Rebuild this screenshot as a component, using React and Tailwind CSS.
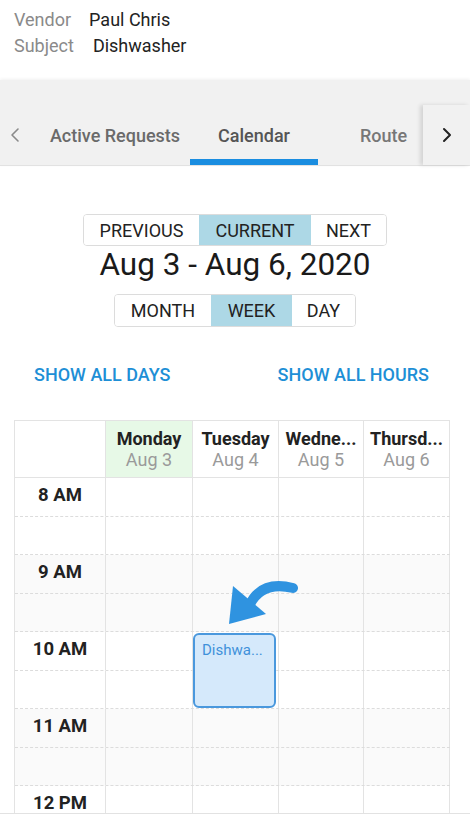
import React from 'react';
import { ChevronLeft, ChevronRight } from 'lucide-react';

const days = [
    { name: 'Monday', date: 'Aug 3', today: true },
    { name: 'Tuesday', date: 'Aug 4' },
    { name: 'Wedne...', date: 'Aug 5' },
    { name: 'Thursd...', date: 'Aug 6' },
];

const hours = ['8 AM', '9 AM', '10 AM', '11 AM', '12 PM'];
const colWidths = ['w-[91px]', 'w-[87px]', 'w-[86px]', 'w-[85px]', 'w-[86px]'];

const Segmented = ({ items, widths, active, height }) => (
    <div className={`flex border border-[#dcdcdc] rounded-[4px] overflow-hidden ${height}`}>
        {items.map((label, i) => (
            <div
                key={label}
                className={`${widths[i]} flex items-center justify-center text-[18px] text-[#222] ${i === active ? 'bg-[#add8e6]' : 'bg-white'}`}
            >
                {label}
            </div>
        ))}
    </div>
);

const App = () => {
    return (
        <div className="relative w-[470px] h-[828px] overflow-hidden bg-white font-['Roboto',sans-serif]">
            {/* Vendor info */}
            <div className="h-[80px] px-[14px] pt-[7px] text-[18px] leading-[26px]">
                <div>
                    <span className="text-[#8a8a8a] mr-[18px]">Vendor</span>
                    <span className="text-[#222]">Paul Chris</span>
                </div>
                <div>
                    <span className="text-[#8a8a8a] mr-[19px]">Subject</span>
                    <span className="text-[#222]">Dishwasher</span>
                </div>
            </div>

            {/* Tabs */}
            <div className="h-[86px] pt-[25px] bg-[#f1f1f1] border-b border-[#e2e2e2] shadow-[0_-1px_3px_rgba(0,0,0,0.06)]">
                <div className="flex h-[60px] text-[18px] font-medium">
                    <div className="w-[30px] flex items-center justify-center">
                        <ChevronLeft size={24} strokeWidth={1.6} className="text-[#8a8a8a]" />
                    </div>
                    <div className="w-[160px] flex items-center justify-center pl-[10px] text-[#6a6a6a]">Active Requests</div>
                    <div className="w-[128px] flex flex-col">
                        <div className="flex-1 flex items-center justify-center pt-[6px] text-[#555]">Calendar</div>
                        <div className="h-[6px] bg-[#1a8de0]" />
                    </div>
                    <div className="flex-1 flex items-center pl-[42px] text-[#777] overflow-hidden">Route</div>
                    <div className="w-[47px] flex items-center justify-center bg-[#f1f1f1] shadow-[-3px_0_4px_rgba(0,0,0,0.12)]">
                        <ChevronRight size={24} strokeWidth={2} className="text-[#222]" />
                    </div>
                </div>
            </div>

            {/* Calendar controls */}
            <div className="pt-[48px] flex flex-col items-center">
                <Segmented
                    items={['PREVIOUS', 'CURRENT', 'NEXT']}
                    widths={['w-[115px]', 'w-[112px]', 'w-[75px]']}
                    active={1}
                    height="h-[32px]"
                />
                <div className="text-[31.5px] leading-[38px] text-[#1a1a1a]">Aug 3 - Aug 6, 2020</div>
                <div className="mt-[10px]">
                    <Segmented
                        items={['MONTH', 'WEEK', 'DAY']}
                        widths={['w-[96px]', 'w-[81px]', 'w-[63px]']}
                        active={1}
                        height="h-[33px]"
                    />
                </div>
            </div>

            <div className="mt-[36px] pl-[34px] pr-[41px] flex justify-between text-[18px] leading-[24px] font-medium text-[#1e8fd6]">
                <span>SHOW ALL DAYS</span>
                <span>SHOW ALL HOURS</span>
            </div>

            {/* Week grid */}
            <div className="mt-[33px] h-[393px] overflow-hidden">
                <div className="relative ml-[14px] w-[436px] border-l border-t border-[#e3e3e3]">
                    <div className="flex h-[57px] border-b border-[#e3e3e3]">
                        <div className={`${colWidths[0]} border-r border-[#e3e3e3]`} />
                        {days.map((d, i) => (
                            <div
                                key={d.date}
                                className={`${colWidths[i + 1]} border-r border-[#e3e3e3] flex flex-col items-center justify-center text-[18px] leading-[21px] ${d.today ? 'bg-[#e7f9e7]' : ''}`}
                            >
                                <span className="font-bold text-[#222]">{d.name}</span>
                                <span className="text-[#9a9a9a]">{d.date}</span>
                            </div>
                        ))}
                    </div>

                    {hours.map((h, hi) => (
                        <div key={h} className={hi % 2 === 1 ? 'bg-[#fafafa]' : 'bg-white'}>
                            {[0, 1].map((half) => (
                                <div key={half} className="flex h-[38.5px] border-b border-dashed border-[#dcdcdc]">
                                    <div className={`${colWidths[0]} border-r border-[#e3e3e3] flex justify-center pt-[6px]`}>
                                        {half === 0 && (
                                            <span className="text-[18.5px] leading-[22px] font-bold text-[#222]">{h}</span>
                                        )}
                                    </div>
                                    {days.map((d, i) => (
                                        <div key={d.date} className={`${colWidths[i + 1]} border-r border-[#e3e3e3]`} />
                                    ))}
                                </div>
                            ))}
                        </div>
                    ))}

                    {/* Event */}
                    <div className="absolute left-[178px] top-[212px] w-[83px] h-[75px] rounded-[6px] border-2 border-[#4a98dd] bg-[#d5e9fb] px-[7px] pt-[5px]">
                        <div className="text-[15px] leading-[20px] text-[#3f91da] truncate">Dishwa...</div>
                    </div>
                </div>
            </div>
            <div className="border-t border-[#e2e2e2]" />

            {/* Pointer arrow */}
            <svg className="absolute left-0 top-0 pointer-events-none" width="470" height="828" viewBox="0 0 470 828">
                <path d="M249 606 Q261 580 293 588" fill="none" stroke="#2f93e0" strokeWidth="10" strokeLinecap="round" />
                <polygon points="233,586 229,624 266,614" fill="#2f93e0" />
            </svg>
        </div>
    );
};

export default App;
